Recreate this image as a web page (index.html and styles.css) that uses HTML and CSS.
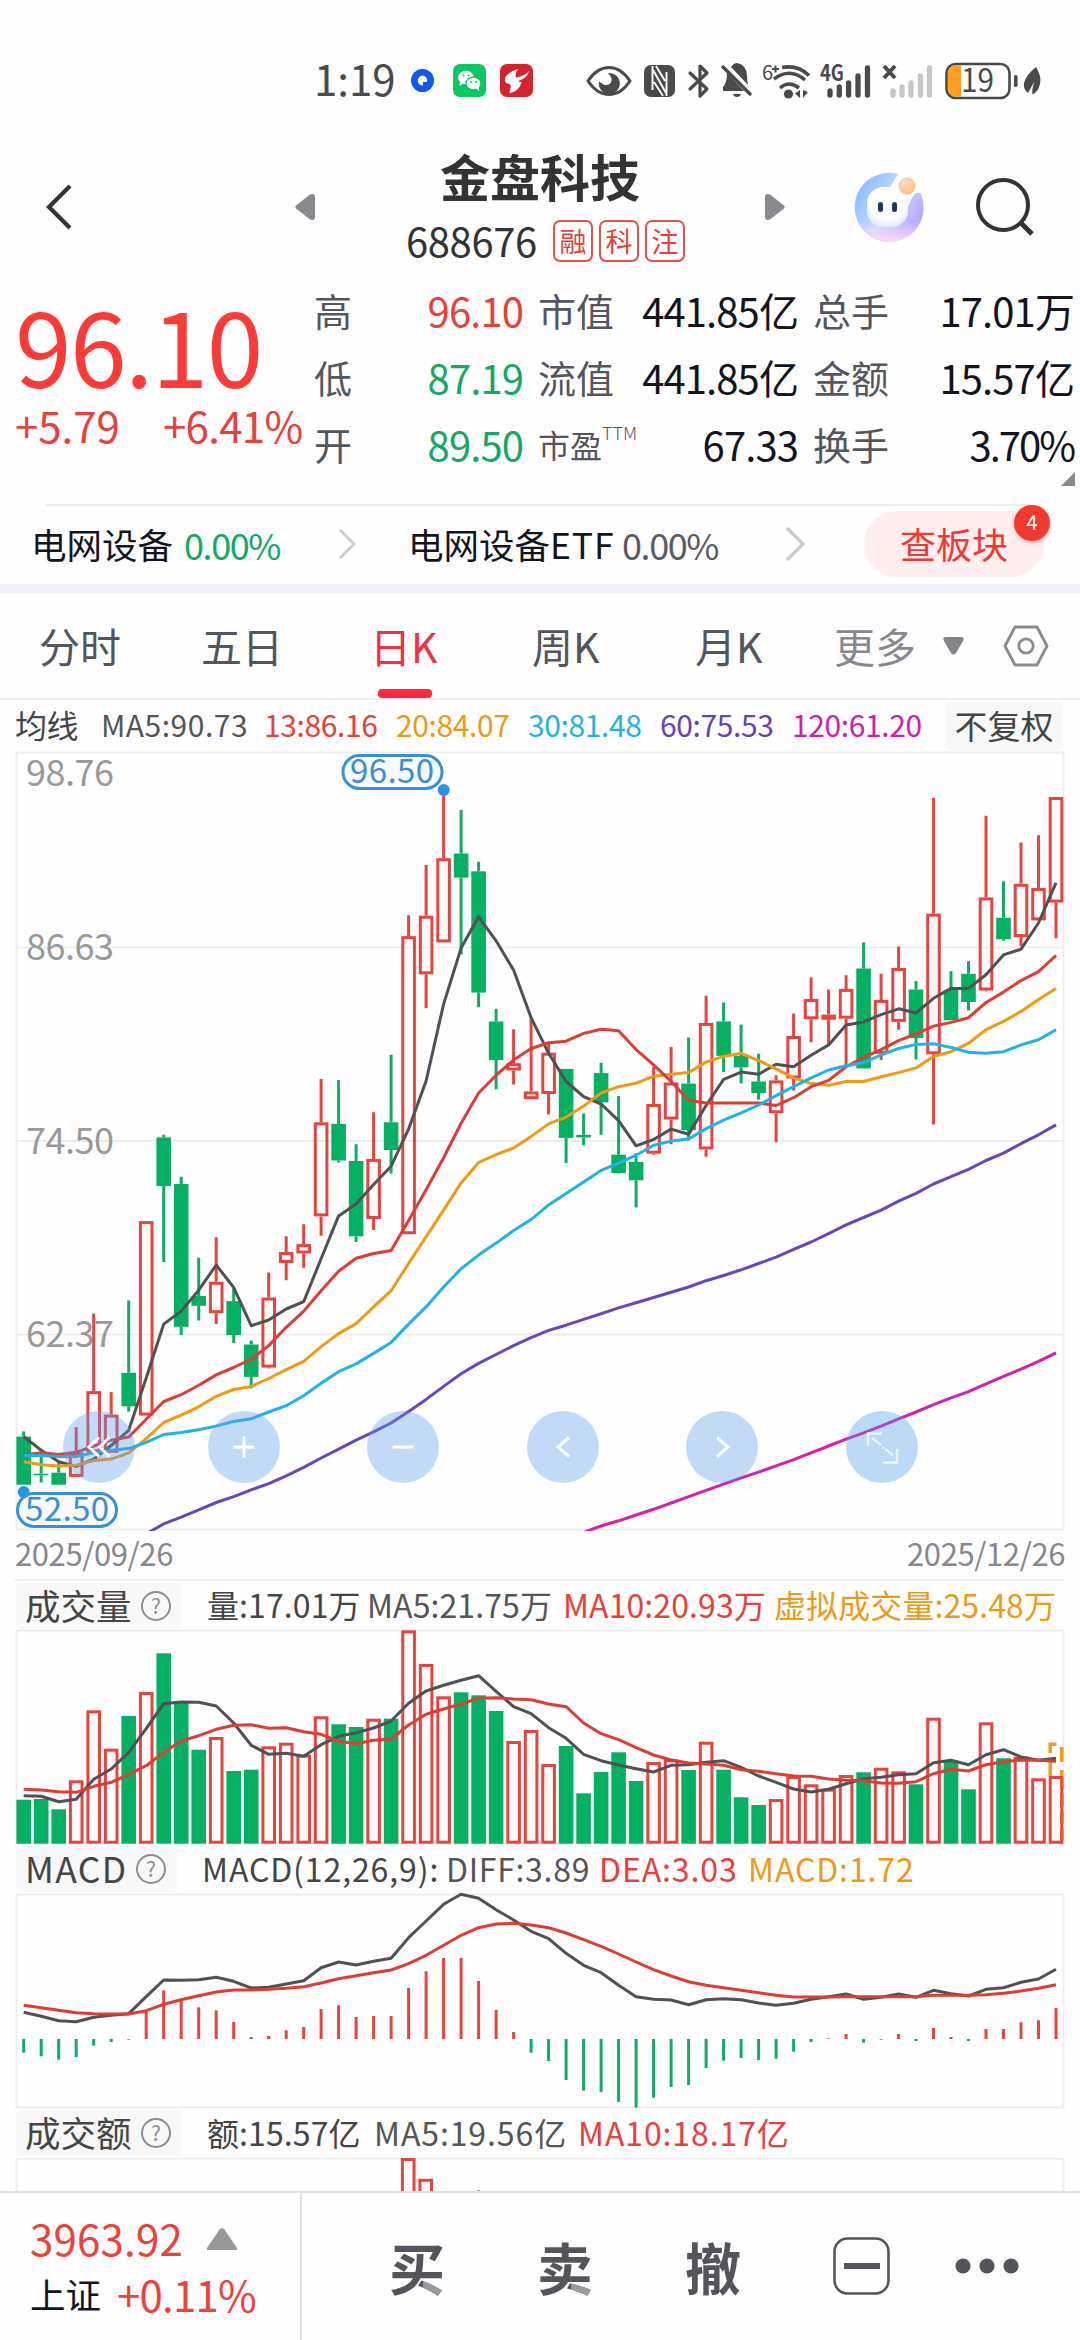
FILE: index.html
```html
<!DOCTYPE html>
<html lang="zh-CN">
<head>
<meta charset="utf-8">
<title>金盘科技 688676</title>
<link rel="stylesheet" href="styles.css">
</head>
<body>
<div class="status">
  <span class="clock">1:19</span>
  <svg class="s-dot" width="23" height="23" viewBox="0 0 23 23"><circle cx="11.500" cy="11.500" r="11.500" fill="#1456f5"/><path d="M11.500 6.500a5 5 0 1 0 .5 10v-3.500h4a5 5 0 0 0-4.500-6.500z" fill="#fff"/></svg>
  <svg class="s-wechat" width="33" height="33" viewBox="0 0 33 33"><rect width="33" height="33" rx="7" fill="#07c95f"/><ellipse cx="13" cy="13.500" rx="8" ry="6.800" fill="#fff"/><path d="M7 17l-.5 5 4-2.500z" fill="#fff"/><ellipse cx="20.500" cy="19.500" rx="7.500" ry="6.300" fill="#fff" stroke="#07c95f" stroke-width="1.200"/><path d="M23 24l3 3v-5z" fill="#fff"/><g fill="#07c95f"><circle cx="10.500" cy="11.500" r="1"/><circle cx="15.500" cy="11.500" r="1"/><circle cx="18" cy="18" r="1"/><circle cx="23" cy="18" r="1"/></g></svg>
  <svg class="s-red" width="33" height="33" viewBox="0 0 33 33"><rect width="33" height="33" rx="7" fill="#d5232f"/><path d="M18 5C9 8 3 13 5.500 18c1 2 4 1.500 5 3 1 2-1 5-1 8 7-1 11-6 12-11-1.500 0-3-.5-3.500-1 6-2 10-5 11-10-4 4-8 6-13 6.500-1-3 .5-6 2-8.500z" fill="#fff"/></svg>
  <svg class="s-eye" width="46" height="32" viewBox="0 0 46 32"><path d="M2 16Q11 2.500 23 2.500T44 16Q35 29.500 23 29.500T2 16z" fill="none" stroke="#4a4a4a" stroke-width="3"/><path d="M22.500 9c6 5 2.500 12-3 11-3-.5-4-2.500-6.500-3.500A10.500 10.500 0 1 0 22.500 8z" fill="#4a4a4a"/></svg>
  <svg class="s-nfc" width="31" height="32" viewBox="0 0 31 32"><rect width="31" height="32" rx="7" fill="#4a4a4a"/><path d="M8.500 1v24M22.500 31V7M8.500 4L22 28M10 17l9 14M12 1l9 15" stroke="#fefefe" stroke-width="1.900" fill="none"/></svg>
  <svg class="s-bt" width="22" height="36" viewBox="0 0 22 36"><path d="M2 10l17 16-7 7V3l7 7L2 26" fill="none" stroke="#4a4a4a" stroke-width="3.200" stroke-linejoin="round" stroke-linecap="round"/></svg>
  <svg class="s-bell" width="31" height="35" viewBox="0 0 31 35"><path d="M2 27V24q4-4 4-14L23 28H2zM10 4q3-4 6-4 10 2 10 13 0 6 1 9zM12 31h8q-1 3-4 3t-4-3z" fill="#4a4a4a"/><path d="M2 4l27 27" stroke="#4a4a4a" stroke-width="3.400" stroke-linecap="round"/></svg>
  <svg class="s-wifi" width="48" height="38" viewBox="0 0 48 38"><text x="0" y="18" class="net six">6</text><path d="M10 7h7M13.500 3.500v7" stroke="#4a4a4a" stroke-width="2"/><g fill="none" stroke="#4a4a4a" stroke-width="3.600"><path d="M20 5.500q16-3 27 8M12 17q16-12 31 1M18 26q9-8 19 0"/></g><circle cx="26.500" cy="32" r="4.600" fill="#4a4a4a"/><path d="M38 28v8l-5-4.500zM41 28v8l5-6z" fill="#4a4a4a"/></svg>
  <svg class="s-sig" width="52" height="36" viewBox="0 0 52 36"><text x="0" y="18" class="net" textLength="24" lengthAdjust="spacingAndGlyphs">4G</text><g stroke="#4a4a4a" stroke-width="5.300" stroke-linecap="round"><path d="M10 28v4M19.300 24v8M28.600 20v12M38 13v19M47.500 5v27"/></g></svg>
  <svg class="s-nosig" width="50" height="36" viewBox="0 0 50 36"><path d="M1 3l11 12M12 3L1 15" stroke="#4a4a4a" stroke-width="4"/><g stroke="#c6c6c6" stroke-width="5.300" stroke-linecap="round"><path d="M10 28v4M19 24v8M28 20v12M37.500 13v19M46.500 5v27"/></g></svg>
  <svg class="s-bat" width="72" height="38" viewBox="0 0 72 38"><path d="M11 3.500h5v31h-5q-8 0-8-8v-15q0-8 8-8z" fill="#ff9f1c"/><rect x="1.500" y="2" width="63" height="34" rx="9" fill="none" stroke="#4a4a4a" stroke-width="2.600"/><rect x="69" y="13" width="3.600" height="12" rx="1.800" fill="#4a4a4a"/><text x="16" y="30" class="bat" textLength="33" lengthAdjust="spacingAndGlyphs">19</text></svg>
  <svg class="s-leaf" width="19" height="28" viewBox="0 0 19 28"><path d="M13 0q6 10 4 17-2 8-7.500 10.500-1-5 2-13L5 26Q0 22 1 16 3 8 13 0z" fill="#4a4a4a"/></svg>
</div>

<header class="head">
  <svg class="h-back" width="30" height="48" viewBox="0 0 30 48"><path d="M27 3L6 24l21 21" fill="none" stroke="#333" stroke-width="4.200"/></svg>
  <svg class="h-prev" width="20" height="28" viewBox="0 0 20 28"><path d="M1 12.500L15 1.500q5-2 5 3v19q0 5-5 3L1 15.500q-1.500-1.500 0-3z" fill="#89888f"/></svg>
  <div class="h-title">
    <h1>金盘科技</h1>
    <div class="h-code"><span>688676</span><b class="tag">融</b><b class="tag">科</b><b class="tag">注</b></div>
  </div>
  <svg class="h-next" width="20" height="28" viewBox="0 0 20 28"><path d="M19 12.500L5 1.500q-5-2-5 3v19q0 5 5 3l14-11q1.500-1.500 0-3z" fill="#89888f"/></svg>
  <svg class="h-bot" width="70" height="70" viewBox="0 0 70 70">
    <defs><linearGradient id="ring" x1="0" y1=".2" x2="1" y2=".8"><stop offset="0" stop-color="#86b8ff"/><stop offset=".5" stop-color="#c5dcff"/><stop offset="1" stop-color="#b89aff"/></linearGradient><radialGradient id="face" cx=".5" cy=".4" r=".6"><stop offset=".7" stop-color="#fff"/><stop offset="1" stop-color="#e6e9ff"/></radialGradient><radialGradient id="bead" cx=".4" cy=".35" r=".7"><stop offset="0" stop-color="#ffe0c4"/><stop offset="1" stop-color="#ffb985"/></radialGradient><linearGradient id="glow" x1=".5" y1="0" x2=".5" y2="1"><stop offset=".7" stop-color="#ffd8f4" stop-opacity="0"/><stop offset="1" stop-color="#ffd8f4"/></linearGradient></defs>
    <path d="M45 2A34.500 34.500 0 1 0 68 22Q62 18 58 28L48 50 22 48 18 24 38 14z" fill="url(#ring)"/><path d="M45 2A34.500 34.500 0 1 0 68 22Q62 18 58 28L48 50 22 48 18 24 38 14z" fill="url(#glow)"/>
    <rect x="14" y="15" width="41" height="40" rx="16" fill="url(#face)"/><circle cx="54" cy="14" r="8.500" fill="url(#bead)"/><rect x="25" y="30" width="5" height="10" rx="2.500" fill="#26355e"/><rect x="39" y="30" width="5" height="10" rx="2.500" fill="#26355e"/>
  </svg>
  <svg class="h-search" width="60" height="60" viewBox="0 0 60 60"><circle cx="28" cy="28" r="25" fill="none" stroke="#333" stroke-width="4"/><path d="M45 45l12 12" stroke="#333" stroke-width="5"/></svg>
</header>

<section class="quote">
  <div class="q-main">
    <div class="q-price">96.10</div>
    <div class="q-change"><span>+5.79</span><span>+6.41%</span></div>
  </div>
  <dl class="q-col c1">
    <div><dt>高</dt><dd class="up">96.10</dd></div>
    <div><dt>低</dt><dd class="down">87.19</dd></div>
    <div><dt>开</dt><dd class="down">89.50</dd></div>
  </dl>
  <dl class="q-col c2">
    <div><dt>市值</dt><dd>441.85亿</dd></div>
    <div><dt>流值</dt><dd>441.85亿</dd></div>
    <div><dt class="pe">市盈<sup>TTM</sup></dt><dd>67.33</dd></div>
  </dl>
  <dl class="q-col c3">
    <div><dt>总手</dt><dd>17.01万</dd></div>
    <div><dt>金额</dt><dd>15.57亿</dd></div>
    <div><dt>换手</dt><dd class="turn">3.70%</dd></div>
  </dl>
  <i class="q-corner"></i>
</section>

<section class="sector">
  <span class="s-name">电网设备</span><span class="s-pct down">0.00%</span>
  <svg class="s-ch1" width="20" height="36" viewBox="0 0 20 36"><path d="M2 4l14 14L2 32" fill="none" stroke="#ccc" stroke-width="3"/></svg>
  <span class="s-name n2">电网设备<em>ETF</em></span><span class="s-pct flat">0.00%</span>
  <svg class="s-ch2" width="22" height="38" viewBox="0 0 22 38"><path d="M2 3l16 16L2 35" fill="none" stroke="#ccc" stroke-width="3.500"/></svg>
  <div class="s-pill">查板块<i class="s-badge">4</i></div>
</section>

<nav class="tabs">
  <span class="t1">分时</span><span class="t2">五日</span><span class="t3 on">日K</span><span class="t4">周K</span><span class="t5">月K</span><span class="t6 more">更多</span>
  <svg class="t-tri" width="21" height="18" viewBox="0 0 21 18"><path d="M3 0h15q4 0 2 4l-7 12q-2.500 3-5 0L1 4q-2-4 2-4z" fill="#85848b"/></svg>
  <svg class="t-hex" width="46" height="42" viewBox="0 0 46 42"><path d="M12 2h22l10 19-10 19H12L2 21z" fill="none" stroke="#8a8990" stroke-width="2.800" stroke-linejoin="round"/><circle cx="23" cy="21" r="7.200" fill="none" stroke="#8a8990" stroke-width="2.800"/></svg>
</nav>

<div class="ma">
  <span class="m0">均线</span><span class="m1 dark">MA5:90.73</span><span class="m2 red">13:86.16</span><span class="m3 gold">20:84.07</span><span class="m4 cyan">30:81.48</span><span class="m5 violet">60:75.53</span><span class="m6 pink">120:61.20</span><span class="m-adj">不复权</span>
</div>

<svg class="plot" width="1080" height="780" viewBox="0 752 1080 780">
  <defs><clipPath id="clip"><rect x="15" y="752" width="1051" height="779"/></clipPath></defs>
  <path class="grid" d="M16.500 752.500H1063.500V1529.500H16.500zM16.500 947.500H1063.500M16.500 1141H1063.500M16.500 1334.500H1063.500"/>
  <g class="axis"><text x="26" y="786" textLength="88">98.76</text><text x="26" y="960" textLength="88">86.63</text><text x="26" y="1153.500" textLength="88">74.50</text><text x="26" y="1347" textLength="88">62.37</text></g>
  <g id="candles" clip-path="url(#clip)"></g>
  <g class="mark"><rect x="343" y="755.500" width="99" height="33" rx="16.500"/><text x="350" y="783" textLength="84">96.50</text><circle cx="443.700" cy="790" r="6"/>
  <rect x="17.500" y="1493.500" width="99" height="33" rx="16.500"/><text x="25" y="1521" textLength="84">52.50</text><circle cx="23.700" cy="1492" r="6"/></g>
  <g class="ctl">
    <circle cx="99" cy="1447" r="36"/><circle cx="244" cy="1447" r="36"/><circle cx="403" cy="1447" r="36"/><circle cx="563" cy="1447" r="36"/><circle cx="722" cy="1447" r="36"/><circle class="full" cx="882" cy="1447" r="36"/>
    <path d="M99 1437.500l-10 9.500 10 9.500M109.500 1437.500l-10 9.500 10 9.500M233.500 1447h21M244 1436.500v21M392.500 1447h21M569 1437.500l-11 9.500 11 9.500M717 1437.500l11 9.500-11 9.500"/>
    <path class="thin" d="M868 1446v-12.500h14M897 1449v13.500h-14M872 1438l9 7M885 1449l8 6M882.500 1447l1 1"/>
  </g>
</svg>
<div class="dates"><span>2025/09/26</span><span>2025/12/26</span></div>

<div class="ind line">
  <span class="ind-tag">成交量<i class="q">?</i></span>
  <span class="v1 ink">量:17.01万</span><span class="v2 dark">MA5:21.75万</span><span class="v3 red">MA10:20.93万</span><span class="v4 gold">虚拟成交量:25.48万</span>
</div>
<svg class="plot" width="1080" height="214" viewBox="0 1630 1080 214">
  <path class="grid" d="M16.500 1630.500H1063.500V1843.500H16.500z"/>
  <g id="volume"></g>
</svg>
<div class="ind">
  <span class="ind-tag en">MACD<i class="q">?</i></span>
  <span class="d1 ink">MACD(12,26,9):</span><span class="d2 dark">DIFF:3.89</span><span class="d3 red">DEA:3.03</span><span class="d4 gold">MACD:1.72</span>
</div>
<svg class="plot" width="1080" height="214" viewBox="0 1894 1080 214">
  <path class="grid" d="M16.500 1894.500H1063.500V2107.500H16.500z"/>
  <g id="macd"></g>
</svg>
<div class="ind">
  <span class="ind-tag">成交额<i class="q">?</i></span>
  <span class="a1 ink">额:15.57亿</span><span class="a2 dark">MA5:19.56亿</span><span class="a3 red">MA10:18.17亿</span>
</div>
<svg class="plot cut" width="1080" height="33" viewBox="0 2158 1080 33">
  <path class="grid" d="M16.500 2200V2158.500H1063.500V2200"/>
  <g class="r"><rect x="402.400" y="2159.500" width="11.600" height="60"/><rect x="419.900" y="2180.300" width="11.600" height="60"/></g>
  <path d="M477.500 2190.500h2" stroke="#777"/>
</svg>

<footer class="foot">
  <div class="f-index">
    <div class="f-row"><span class="f-val">3963.92</span><svg width="30" height="22" viewBox="0 0 30 22"><path d="M12.500 1.500q2.500-3 5 0L30 20v2H0v-2z" fill="#999"/></svg></div>
    <div class="f-row"><span class="f-name">上证</span><span class="f-val pct">+0.11%</span></div>
  </div>
  <div class="f-act">
    <b class="b1">买</b><b class="b2">卖</b><b class="b3">撤</b>
    <svg class="f-min" width="58" height="58" viewBox="0 0 58 58"><rect x="1.500" y="1.500" width="54" height="55" rx="13" fill="none" stroke="#54545d" stroke-width="2.600"/><path d="M11 29h36" stroke="#54545d" stroke-width="6"/></svg>
    <svg class="f-dots" width="64" height="16" viewBox="0 0 64 16"><g fill="#54545d"><circle cx="8" cy="8" r="7.600"/><circle cx="32" cy="8" r="7.600"/><circle cx="56" cy="8" r="7.600"/></g></svg>
  </div>
</footer>
<script src="charts.js"></script>
</body>
</html>
```
FILE: styles.css
```css
* { box-sizing: border-box; }
body { margin: 0; width: 1080px; height: 2340px; overflow: hidden; background: #fefefe; color: #14141e;
  font-family: "Noto Sans CJK SC", "Noto Sans", sans-serif; line-height: 1; }
svg { display: block; flex: none; overflow: visible; }
span, b, dt, dd { white-space: nowrap; }
i, em { font-style: normal; }
b { font-weight: 400; }
.up, .red { color: #e8403a; }
.down { color: #14a866; }
.flat { color: #5a5a63; }
.ink { color: #454545; }
.dark { color: #555; }
.gold { color: #eb9a1a; }
.cyan { color: #20b3e0; }
.violet { color: #6543b5; }
.pink { color: #d120a8; }

.status { display: flex; height: 130px; padding: 31px 0 0 314px; align-items: center; }
.clock { font-size: 42px; line-height: 42px; color: #4a4a4a; width: 97px; letter-spacing: 0; padding-bottom: 6px; }
.s-wechat { margin-left: 19px; }
.s-red { margin-left: 14px; }
.s-eye { margin-left: 53px; }
.s-nfc { margin-left: 12px; }
.s-bt { margin-left: 13px; }
.s-bell { margin-left: 11px; }
.s-wifi { margin-left: 10px; }
.s-sig { margin-left: 10px; }
.s-nosig { margin-left: 11px; }
.s-bat { margin-left: 12px; }
.s-leaf { margin-left: 6px; }
.net { font-size: 22px; font-weight: 700; fill: #4a4a4a; }
.net.six { font-size: 20px; font-weight: 400; }
.bat { font-size: 32px; fill: #4a4a4a; }

.head { display: flex; height: 145px; align-items: center; padding: 8px 0 0 43px; }
.head > svg { margin-top: 0; }
.h-prev { margin-left: 222px; }
.h-title { width: 450px; text-align: center; margin-top: -4px; }
.h-title h1 { margin: 0 0 17px; font-size: 50px; line-height: 56px; font-weight: 700; color: #333; }
.h-code { display: flex; align-items: center; padding-left: 91px; height: 42px; color: #333; }
.h-code span { font-size: 40px; width: 147px; text-align: left; letter-spacing: -.4px; padding-bottom: 2px; }
.tag { width: 40px; height: 42px; margin-right: 6px; border: 2px solid #e5504b; border-radius: 7px; color: #e5403b; font-size: 27px; line-height: 37px; }
.h-bot { margin-left: 68px; }
.h-search { margin-left: 52px; }

.quote { position: relative; display: flex; height: 229px; }
.q-main { width: 314px; padding: 19px 0 0 15px; color: #fb3b38; }
.q-price { font-size: 102px; line-height: 100px; letter-spacing: -1.6px; }
.q-change { display: flex; font-size: 42px; line-height: 44px; margin-top: 9px; letter-spacing: 0; color: #ea403c; }
.q-change span:first-child { width: 148px; }
.q-change span:last-child { letter-spacing: -.7px; }
.q-col { margin: 0; padding-top: 1px; }
.q-col > div { display: flex; justify-content: space-between; align-items: center; height: 67px; }
.q-col dt { font-size: 38px; color: #55555e; }
.q-col dd { margin: 0; font-size: 40px; letter-spacing: -.9px; }
.q-col .turn { letter-spacing: -2px; }
.c1 { width: 209px; }
.c2 { width: 260px; margin-left: 15px; }
.c3 { width: 261px; margin-left: 15px; }
.q-col .pe { font-size: 32px; display: flex; }
.pe sup { font-size: 18px; line-height: 17px; margin-top: -4px; font-weight: 300; }
.q-corner { position: absolute; right: 5px; bottom: 18px; border: 7.500px solid; border-color: transparent #89888f #89888f transparent; }

.sector { display: flex; align-items: center; height: 80px; position: relative; padding-left: 31px;
  background: linear-gradient(#eee, #eee) 45px 0 / 985px 2px no-repeat; }
.s-name { font-size: 35.500px; width: 153px; }
.s-name.n2 { width: 214px; margin-left: 50px; }
.s-name em { letter-spacing: .9px; }
.s-pct { font-size: 36px; width: 154px; letter-spacing: -1.4px; }
.s-pct.flat { width: 163px; }
.s-pill { position: relative; width: 180px; height: 66px; margin-left: 57px; border-radius: 33px; background: #ffeeee; color: #ef3935; font-size: 36px; line-height: 65px; text-align: center; }
.s-badge { position: absolute; right: -6px; top: -6px; width: 36px; height: 36px; border-radius: 50%; background: #f13a2f; box-shadow: 0 2px 5px rgba(240, 60, 50, .3); color: #fff; font-size: 20px; line-height: 34px; }

.tabs { display: flex; height: 116px; border-top: 9px solid #f1f2f7; border-bottom: 2px solid #eee; align-items: center; padding-left: 39px; font-size: 41px; color: #54545d; }
.tabs span { line-height: 105px; height: 105px; position: relative; }
.t1 { width: 162px; } .t2 { width: 169px; } .t3 { width: 162px; } .t4 { width: 163px; } .t5 { width: 139px; } .t6 { width: 109px; }
.tabs .on { color: #f62e45; }
.tabs .on::after { content: ""; position: absolute; left: 8px; bottom: 0; width: 54px; height: 9px; border-radius: 4px; background: #ff2741; }
.tabs .more { color: #88878e; }
.t-hex { margin-left: 39px; }

.ma { display: flex; align-items: center; height: 52px; padding-left: 15px; font-size: 30px; letter-spacing: -.4px; }
.ma span { padding-bottom: 4px; }
.m0 { width: 86px; font-size: 32px; color: #444; } .m1 { width: 163px; letter-spacing: .5px; } .m2, .m3, .m4, .m5 { width: 132px; } .m6 { width: 153px; }
.ma .m-adj { width: 118px; height: 48px; padding: 0; border-radius: 7px; background: #f8f8f8; text-align: center; font-size: 33px; line-height: 47px; color: #444; letter-spacing: 0; }

.plot.cut { overflow: hidden; }
.grid { fill: none; stroke: #ededed; stroke-width: 2; }
.axis text { font-size: 36px; fill: #999; }
.mark rect { fill: #f8fafc; stroke: #3a8ed6; stroke-width: 3; }
.mark text { font-size: 33px; fill: #3a8ed6; }
.mark circle { fill: #2c92e6; }
.ctl circle { fill: rgba(91, 152, 238, .36); }
.ctl circle.full { fill: rgba(75, 158, 232, .37); }
.ctl path { fill: none; stroke: #fff; stroke-width: 3; }
.ctl .thin { stroke-width: 2.500; stroke: #eaf5fd; }
.r rect { fill: #fefefe; stroke: #e9433f; stroke-width: 3; }
.r path { stroke: #e9433f; stroke-width: 3; }
.g rect { fill: #06b062; }
.g path { stroke: #12ab65; stroke-width: 3; }
#candles .r rect { fill: none; }
.curve { fill: none; stroke-width: 3; stroke-linejoin: round; }
.virtual { fill: none; stroke: #eda01c; stroke-width: 3.500; stroke-dasharray: 15 8; }
.virtual.low { stroke: #f0572f; stroke-dasharray: 12 5; }

.dates { display: flex; justify-content: space-between; height: 47px; padding: 6px 15px 0; font-size: 31px; line-height: 30px; color: #88878e; letter-spacing: -.4px; }
.ind { display: flex; align-items: center; height: 50px; padding-left: 16px; font-size: 32px; letter-spacing: .1px; }
.ind span { padding-bottom: 3px; }
.ind.line { border-top: 2px solid #efefef; margin-left: 15px; margin-right: 16px; padding-left: 1px; height: 51px; }
.ind .ind-tag { display: flex; align-items: center; justify-content: space-between; width: 166px; height: 46px; margin-right: 25px; padding: 0 11px 2px 9px; border-radius: 6px; background: #f8f8f8; color: #454545; font-size: 35.500px; letter-spacing: 0; }
.ind .ind-tag.en { width: 161px; letter-spacing: 1.400px; }
.q { width: 30px; height: 30px; border: 2px solid #8c8c92; border-radius: 50%; color: #8c8c92; font-size: 21px; line-height: 25px; text-align: center; letter-spacing: 0; margin-top: 2px; }
.v1 { width: 160px; } .v2 { width: 196px; } .v3 { width: 211px; }
.d1 { width: 244px; letter-spacing: .9px; } .d2 { width: 153px; letter-spacing: .7px; } .d3 { width: 149px; letter-spacing: .9px; } .d4 { letter-spacing: .9px; }
.a1 { width: 167px; } .a2 { width: 204px; letter-spacing: .9px; } .a3 { letter-spacing: .9px; }

.foot { display: flex; position: relative; height: 149px; border-top: 2px solid #e2e2e2; background: #fefefe; }
.f-index { width: 302px; border-right: 2px solid #e2e2e2; padding: 20px 0 0 30px; }
.f-row { display: flex; align-items: center; height: 50px; margin-bottom: 6px; }
.f-row svg { margin-left: 24px; margin-top: 2px; }
.f-val { font-size: 42px; color: #ec413d; letter-spacing: .2px; }
.f-val.pct { letter-spacing: -.8px; }
.f-name { font-size: 35.500px; width: 87px; }
.f-act { display: flex; align-items: center; padding: 0 0 2px 87px; }
.f-act b { font-size: 56px; line-height: 64px; font-weight: 700; width: 56px; color: transparent; -webkit-background-clip: text; background-clip: text; margin-right: 92px;
  background-image: linear-gradient(#9a9aa0, #9a9aa0), linear-gradient(#54545d, #54545d); background-repeat: no-repeat; background-position: 34px 48px, 0 0; background-size: 22px 20px, 100% 100%; }
.f-act .b3 { background-image: linear-gradient(#54545d, #54545d); background-position: 0 0; background-size: 100% 100%; margin-right: 92px; }
.f-dots { margin-left: 64px; }
```
FILE: charts.js
```js
// Sessions from 2025/09/26 to 2025/12/26, one slot every 17.5px.
const X = i => 23.7 + 17.497 * i;
const HALF = 7.3;

// [rising, high, body top, body bottom, low] in price-plot units.
const candles = [
[0,1322,1332,1424,1424],[0,1370,1403,1406,1420],[0,1382,1401,1424,1424],[1,1314,1362,1409,1409],[1,1097,1245,1362,1362],
[1,1247,1290,1363,1363],[0,1072,1210,1274,1284],[1,920,920,1292,1292],[0,755,760,853,998],[0,835,849,1122,1138],
[0,990,1063,1082,1110],[1,951,1036,1096,1117],[0,1047,1073,1138,1153],[0,1148,1156,1218,1240],[1,1018,1066,1200,1202],
[1,949,979,1000,1033],[1,926,964,982,1009],[1,648,731,911,948],[0,650,734,804,808],[0,773,805,949,960],
[1,712,801,916,937],[0,602,731,784,829],[1,335,375,945,945],[1,239,336,448,513],[1,100,226,387,387],
[0,134,217,263,410],[0,233,251,483,511],[0,514,538,612,668],[1,553,618,632,659],[1,532,672,687,687],
[1,578,598,677,716],[0,629,629,761,809],[0,714,755,760,775],[0,617,637,693,755],[0,681,793,828,829],
[0,790,807,842,894],[1,625,696,791,793],[1,587,655,726,773],[0,569,657,746,766],[1,489,541,783,797],
[0,502,538,604,635],[0,544,604,626,657],[0,600,653,675,688],[1,641,651,714,769],[1,523,566,647,670],
[1,454,495,534,578],[1,477,525,535,583],[1,450,476,533,625],[0,387,437,628,628],[1,447,497,600,612],
[1,395,436,539,554],[0,461,477,570,611],[1,111,332,601,735],[0,442,478,536,536],[0,423,447,501,517],
[1,145,301,479,481],[0,270,340,381,384],[1,196,275,377,394],[1,182,283,345,345],[1,109,109,311,379]];

const ma5 = [1332,1358,1380,1389,1375,1349,1320,1220,1117,1092,1052,1004,1047,1120,1109,1088,1074,992,910,887,850,815,744,652,505,398,338,384,440,531,599,653,682,696,728,776,764,744,754,699,649,635,639,620,625,603,583,545,539,525,514,522,494,475,475,449,411,400,350,273];
const ma13 = [1367,1363,1366,1362,1350,1339,1333,1299,1265,1252,1234,1214,1200,1184,1158,1123,1092,1053,1016,991,982,976,919,860,799,733,675,641,612,590,579,576,561,553,556,592,621,653,689,694,694,694,694,699,684,663,651,625,607,592,575,562,547,540,531,502,482,460,443,412];
const ma20 = [1380,1386,1388,1387,1378,1375,1363,1336,1305,1291,1275,1255,1242,1236,1221,1204,1188,1160,1135,1116,1084,1053,1001,950,899,847,808,793,780,758,734,721,700,675,663,656,643,639,636,616,605,599,613,629,646,657,660,653,653,644,636,627,605,596,580,554,538,519,496,475];
const ma30 = [1368,1368,1370,1370,1363,1358,1355,1343,1328,1324,1319,1312,1303,1298,1285,1273,1254,1230,1208,1193,1173,1152,1117,1084,1046,1011,985,962,938,917,889,867,845,823,809,794,775,767,763,743,727,713,698,680,663,646,631,623,617,602,590,582,581,588,597,599,596,583,573,554];
const ma60 = [1518,1499,1486,1472,1458,1447,1434,1422,1407,1391,1373,1356,1339,1323,1306,1284,1261,1236,1212,1192,1175,1158,1143,1129,1119,1108,1097,1086,1076,1066,1056,1046,1034,1024,1013,1001,989,974,960,944,927,913,899,882,867,849,835,821,804,790,772,755,736];
const ma120 = [1515,1503,1493,1482,1471,1459,1447,1435,1423,1411,1400,1388,1376,1363,1350,1337,1325,1312,1298,1285,1271,1258,1246,1231,1217,1203,1188,1172];

const vol = [719,717,748,661,451,566,468,396,280,428,569,531,633,629,559,548,584,469,493,501,476,476,211,312,409,397,406,453,543,510,612,558,700,636,577,663,606,598,630,545,629,712,735,717,648,673,686,645,637,623,634,673,473,603,688,487,595,590,655,648];
const vol5 = [707,709,725,718,658,627,577,506,431,426,427,438,489,556,583,580,589,554,529,518,504,483,430,393,376,361,347,394,440,461,503,535,583,602,615,626,636,616,614,607,602,622,648,667,687,696,688,671,656,652,644,641,608,601,614,584,569,591,601,595];
const vol10 = [688,690,695,697,679,667,643,617,577,543,527,508,496,494,505,503,515,523,544,551,541,537,495,463,447,432,415,413,417,419,432,440,489,521,539,563,585,600,609,612,616,629,634,641,648,649,657,661,662,669,670,665,641,628,633,614,605,600,601,604];

const hist = [638,649,659,651,617,606,599,515,451,480,502,511,546,591,588,571,561,507,496,531,528,528,444,394,354,354,423,510,576,638,663,720,752,756,786,803,773,741,735,684,662,654,660,656,635,606,595,582,608,599,582,603,564,591,603,567,567,547,541,504];
const diff = [517,529,542,545,532,526,521,470,420,421,419,412,424,444,442,432,422,383,366,375,364,355,293,243,193,163,175,209,240,274,296,340,376,398,436,470,478,480,494,479,476,479,489,496,490,478,470,462,478,472,462,472,451,461,468,448,443,427,417,388];
const dea = [496,503,511,518,521,522,522,512,493,479,467,456,450,450,448,445,440,429,416,407,398,390,371,346,316,286,263,252,250,255,263,279,299,319,342,366,389,408,425,436,443,451,458,466,471,471,471,470,470,470,470,470,466,466,466,464,460,453,445,434];

const f = n => n.toFixed(1);
const curve = (data, y, color, start = 0) =>
  `<polyline class="curve" stroke="${color}" points="${data.map((v, i) => f(X(i + start)) + ',' + f(y(v))).join(' ')}"/>`;

function body(up, x, top, bottom) {
  const inset = up ? 1.5 : 0;
  const h = Math.max(bottom - top - 2 * inset, 1.6);
  return `<rect x="${f(x - HALF + inset)}" y="${f(top + inset)}" width="${f(2 * (HALF - inset))}" height="${f(h)}"/>`;
}

const priceY = v => 740 + v / 1.9122;
document.getElementById('candles').innerHTML = candles.map(([up, hi, top, bot, lo], i) => {
  const x = X(i), y = priceY;
  return `<g class="${up ? 'r' : 'g'}"><path d="M${f(x)} ${f(y(hi))}V${f(y(top))}M${f(x)} ${f(y(bot))}V${f(y(lo))}"/>${body(up, x, y(top), y(bot))}</g>`;
}).join('') +
  curve(ma5, priceY, '#515151') + curve(ma20, priceY, '#f09a12') + curve(ma13, priceY, '#e03c33') +
  curve(ma30, priceY, '#1db4e6') + curve(ma60, priceY, '#6b45c0', 7) + curve(ma120, priceY, '#d81eaa', 32);

const volY = v => 1560 + v / 3;
document.getElementById('volume').innerHTML = vol.map((v, i) =>
  `<g class="${candles[i][0] ? 'r' : 'g'}">${body(candles[i][0], X(i), volY(v), 1843.7)}</g>`).join('') +
  `<path class="virtual" d="M${f(X(59) - 5.8)} ${f(volY(648))}V${f(volY(553))}H${f(X(59) + 5.8)}V${f(volY(648))}"/>` +
  `<path class="virtual low" d="M${f(X(59) + 5.8)} ${f(volY(652))}V1843"/>` +
  curve(vol5, volY, '#515151') + curve(vol10, volY, '#e03c33');

const macdY = v => 1840 + v / 3;
document.getElementById('macd').innerHTML = hist.map((v, i) =>
  `<g class="${v < 597 ? 'r' : 'g'}"><path d="M${f(X(i))} 2039V${f(macdY(v))}"/></g>`).join('') +
  curve(diff, macdY, '#515151') + curve(dea, macdY, '#e03c33');
```
